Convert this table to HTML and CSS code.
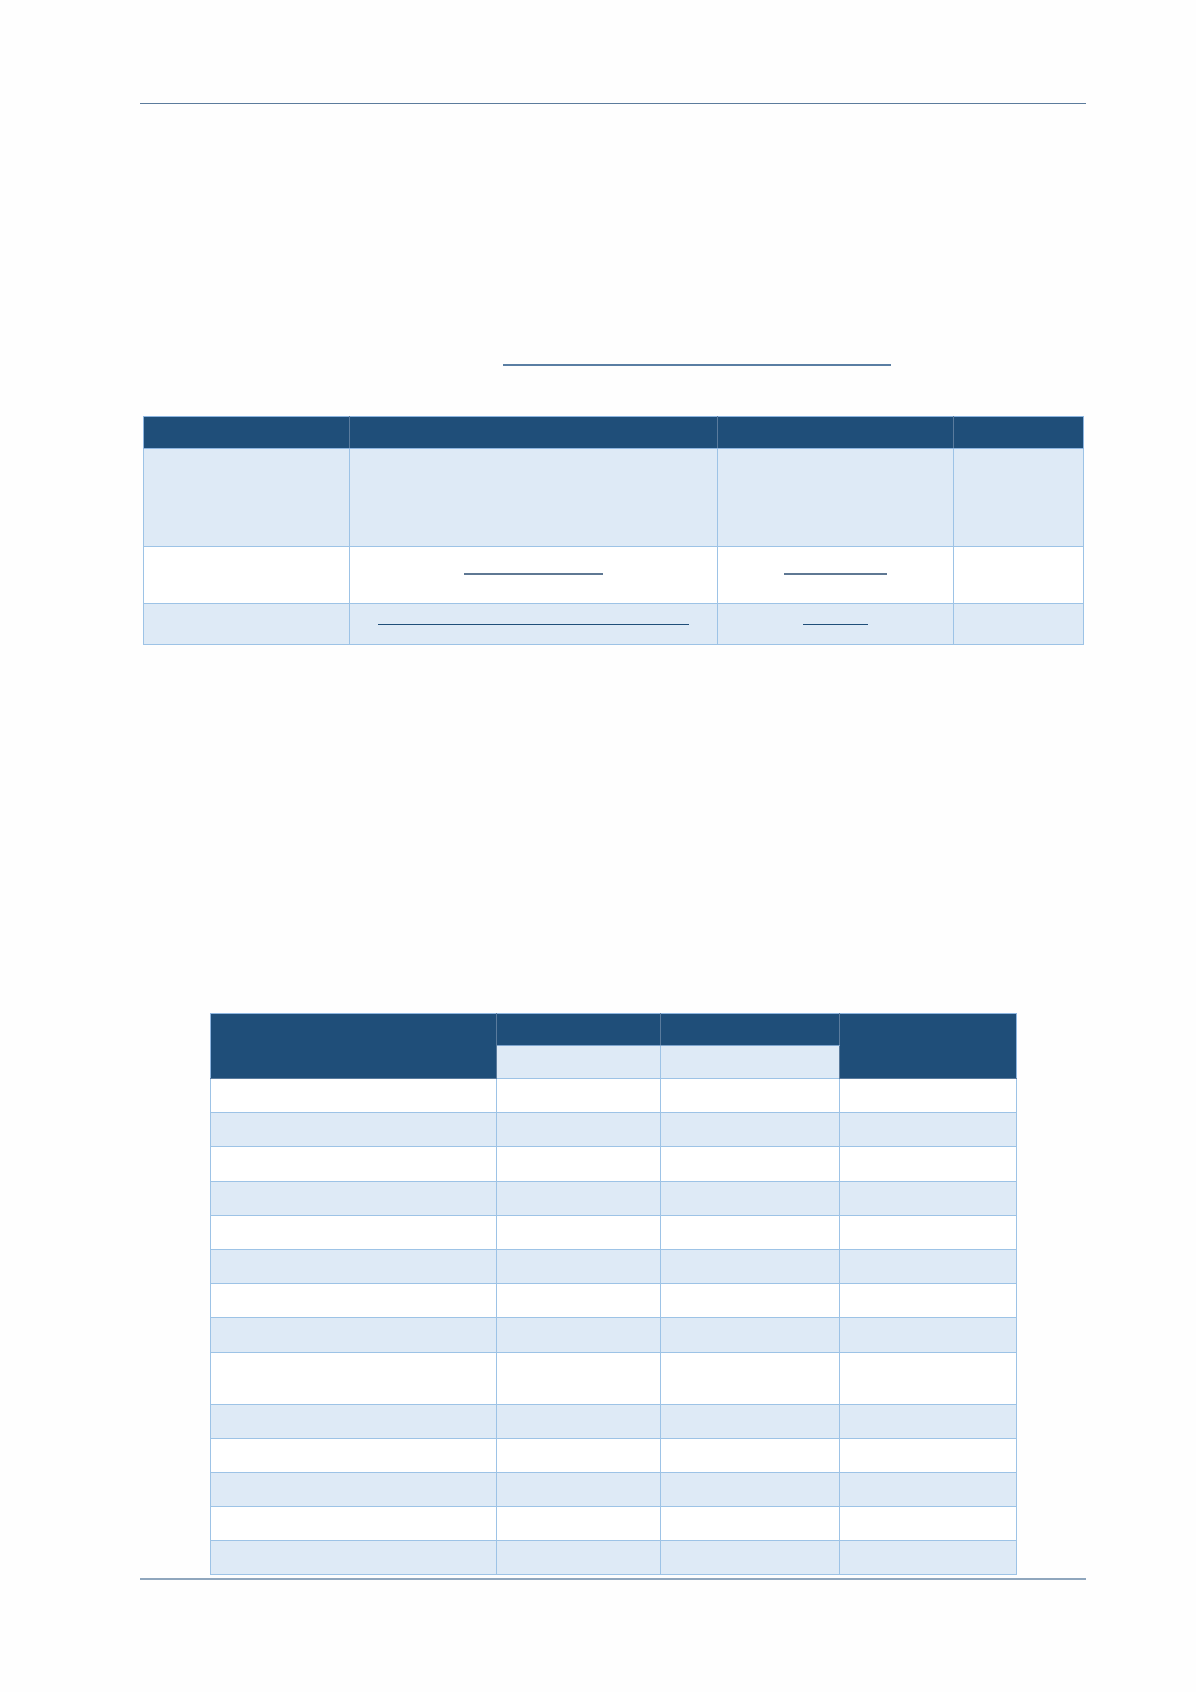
FILE: index.html
```html
<!DOCTYPE html>
<html lang="en">
<head>
<meta charset="utf-8">
<title>Document page</title>
<link rel="stylesheet" href="styles.css">
</head>
<body>
<div class="page">
  <div class="page-header"></div>
  <div class="title-link"></div>

  <table class="t1">
    <colgroup>
      <col class="c206"><col class="c368"><col class="c236"><col class="c130">
    </colgroup>
    <thead>
      <tr class="h32"><th></th><th></th><th></th><th></th></tr>
    </thead>
    <tbody>
      <tr class="r98 light"><td></td><td></td><td></td><td></td></tr>
      <tr class="r57"><td></td><td><span class="ul ul-grey w139"></span></td><td><span class="ul ul-grey w103"></span></td><td></td></tr>
      <tr class="r41 light"><td></td><td><span class="ul ul-navy w311"></span></td><td><span class="ul ul-navy w65"></span></td><td></td></tr>
    </tbody>
  </table>

  <table class="t2">
    <colgroup>
      <col class="c286"><col class="c164"><col class="c179"><col class="c177">
    </colgroup>
    <thead>
      <tr class="h32"><th rowspan="2"></th><th class="top"></th><th class="top"></th><th rowspan="2"></th></tr>
      <tr class="h33"><th class="sub"></th><th class="sub"></th></tr>
    </thead>
    <tbody>
      <tr class="r"><td></td><td></td><td></td><td></td></tr>
      <tr class="r light"><td></td><td></td><td></td><td></td></tr>
      <tr class="r"><td></td><td></td><td></td><td></td></tr>
      <tr class="r light"><td></td><td></td><td></td><td></td></tr>
      <tr class="r"><td></td><td></td><td></td><td></td></tr>
      <tr class="r light"><td></td><td></td><td></td><td></td></tr>
      <tr class="r"><td></td><td></td><td></td><td></td></tr>
      <tr class="r light"><td></td><td></td><td></td><td></td></tr>
      <tr class="r-tall"><td></td><td></td><td></td><td></td></tr>
      <tr class="r light"><td></td><td></td><td></td><td></td></tr>
      <tr class="r"><td></td><td></td><td></td><td></td></tr>
      <tr class="r light"><td></td><td></td><td></td><td></td></tr>
      <tr class="r"><td></td><td></td><td></td><td></td></tr>
      <tr class="r light"><td></td><td></td><td></td><td></td></tr>
    </tbody>
  </table>

  <div class="page-footer"></div>
</div>
</body>
</html>
```

FILE: styles.css
```css
html, body {
  margin: 0;
  padding: 0;
  background: #fefefe;
  font-family: "Liberation Sans", Arial, sans-serif;
}

.page {
  width: 946px;
  margin-left: 140px;
  display: flex;
  flex-direction: column;
}

.page-header {
  height: 103px;
  border-bottom: 1px solid #5b7b9c;
}

.title-link {
  margin-top: 260px;
  margin-left: 363px;
  width: 388px;
  height: 0;
  border-top: 2px solid #5a7ea3;
}

table {
  border-collapse: collapse;
  table-layout: fixed;
}

th, td {
  padding: 0;
  border: 1px solid #9dc3e6;
  background: #ffffff;
  vertical-align: middle;
  text-align: center;
}

th {
  background: #1f4e79;
  border-color: #5a7b9d;
}

tr.light td {
  background: #deeaf6;
}

/* Table 1 */
.t1 {
  margin-top: 50px;
  margin-left: 3px;
  width: 940px;
}
.t1 thead th {
  border-top-color: #8fb6e0;
  border-bottom-color: #8fb6e0;
}
.t1 thead th:first-child { border-left-color: #8fb6e0; }
.t1 thead th:last-child { border-right-color: #8fb6e0; }

.c206 { width: 206px; }
.c368 { width: 368px; }
.c236 { width: 236px; }
.c130 { width: 130px; }

.h32 { height: 32px; }
.h33 { height: 33px; }
.r98 { height: 98px; }
.r57 { height: 57px; }
.r41 { height: 41px; }

.ul {
  display: block;
  margin: 0 auto;
  height: 0;
}
.ul-grey { border-top: 2px solid #5f7893; }
.ul-navy { border-top: 1px solid #1f4e79; }
.w139 { width: 139px; margin-top: -2px; }
.w103 { width: 103px; margin-top: -2px; }
.w311 { width: 311px; }
.w65 { width: 65px; }

/* Table 2 */
.t2 {
  margin-top: 368px;
  margin-left: 70px;
  width: 806px;
}
.t2 thead th {
  border-top-color: #8fb6e0;
}
.t2 thead th:first-child { border-left-color: #8fb6e0; }
.t2 thead tr:first-child th:last-child { border-right-color: #8fb6e0; }
.t2 th.top { border-bottom-color: #7ea4cc; }
.t2 th.sub {
  background: #deeaf6;
  border-color: #9dc3e6;
}

.c286 { width: 286px; }
.c164 { width: 164px; }
.c179 { width: 179px; }
.c177 { width: 177px; }

.r { height: 34.2px; }
.r-tall { height: 52px; }

.page-footer {
  margin-top: 3px;
  height: 0;
  border-top: 2px solid #8fa6bd;
}
```
